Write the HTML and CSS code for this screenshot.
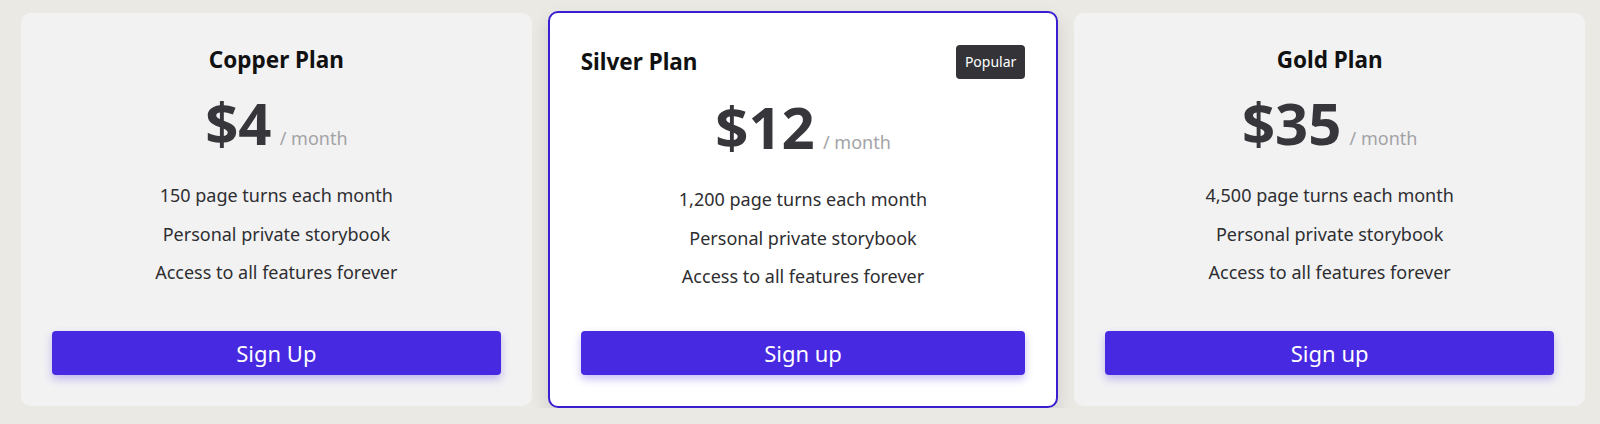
FILE: index.html
```html
<!DOCTYPE html>
<html lang="en">
<head>
    <meta charset="UTF-8">
    <meta name="viewport" content="width=device-width, initial-scale=1.0">
    <title>Pricing</title>
    <link rel="stylesheet" href="styles.css">
</head>
<body>
    <div class="plans">
        <div class="plan">
            <h2 class="plan-name">Copper Plan</h2>
            <div class="price">
                <span class="amount">$4</span>
                <span class="period">/ month</span>
            </div>
            <ul class="features">
                <li>150 page turns each month</li>
                <li>Personal private storybook</li>
                <li>Access to all features forever</li>
            </ul>
            <button class="signup">Sign Up</button>
        </div>

        <div class="plan featured">
            <div class="plan-head">
                <h2 class="plan-name">Silver Plan</h2>
                <span class="badge">Popular</span>
            </div>
            <div class="price">
                <span class="amount">$12</span>
                <span class="period">/ month</span>
            </div>
            <ul class="features">
                <li>1,200 page turns each month</li>
                <li>Personal private storybook</li>
                <li>Access to all features forever</li>
            </ul>
            <button class="signup">Sign up</button>
        </div>

        <div class="plan">
            <h2 class="plan-name">Gold Plan</h2>
            <div class="price">
                <span class="amount">$35</span>
                <span class="period">/ month</span>
            </div>
            <ul class="features">
                <li>4,500 page turns each month</li>
                <li>Personal private storybook</li>
                <li>Access to all features forever</li>
            </ul>
            <button class="signup">Sign up</button>
        </div>
    </div>
</body>
</html>
```

FILE: styles.css
```css
body {
    font-family: "Noto Sans", "Open Sans", sans-serif;
    background-color: #ebe9e4;
    margin: 0;
    padding: 0;
}

.plans {
    display: grid;
    grid-template-columns: repeat(3, 1fr);
    gap: 16px;
    align-items: center;
    padding: 11px 15px 0 21px;
}

.plan {
    background-color: #f2f2f3;
    border-radius: 10px;
    padding: 32px 31px 31px;
    height: 393px;
    box-sizing: border-box;
    display: flex;
    flex-direction: column;
    text-align: center;
}

.plan.featured {
    background-color: #fff;
    border: 2px solid #3a1fd2;
    height: 397px;
    box-shadow: 0 8px 18px rgba(0, 0, 0, 0.12);
}

.plan-head {
    display: flex;
    justify-content: space-between;
    align-items: center;
    text-align: left;
}

.plan-name {
    margin: 0;
    font-size: 22.5px;
    line-height: 30px;
    font-weight: 700;
    color: #111;
}

.badge {
    background-color: #333338;
    color: #fff;
    font-size: 14px;
    line-height: 21px;
    padding: 6px 9px 7px;
    border-radius: 4px;
}

.price {
    margin-top: 16px;
    line-height: 64px;
}

.amount {
    font-size: 58px;
    font-weight: 700;
    color: #37363b;
}

.period {
    font-size: 18px;
    color: #a3a3a6;
    margin-left: 4px;
}

.features {
    list-style: none;
    margin: 5px 0 0;
    padding: 0;
}

.features li {
    font-size: 18px;
    line-height: 38.5px;
    color: #2e2e31;
}

.signup {
    margin-top: auto;
    height: 44px;
    border: none;
    border-radius: 4px;
    background-color: #4829e2;
    color: #fff;
    font-family: inherit;
    font-size: 22px;
    cursor: pointer;
    box-shadow: 0 4px 8px rgba(72, 41, 226, 0.3);
}

.signup:hover {
    background-color: #3a1fc4;
}
```
